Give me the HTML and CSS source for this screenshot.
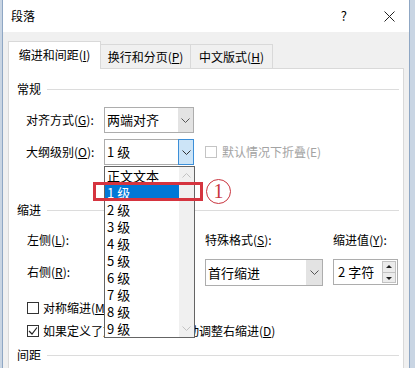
FILE: index.html
```html
<!DOCTYPE html>
<html lang="zh">
<head>
    <meta charset="UTF-8">
    <title>段落</title>
    <link rel="stylesheet" href="styles.css">
</head>
<body>
    <div class="window">
        <!-- 标题栏 -->
        <div class="titlebar">
            <span class="title">段落</span>
            <span class="help">?</span>
            <span class="close">
                <svg width="11" height="11" viewBox="0 0 11 11"><path d="M0.5 0.5 L10.5 10.5 M10.5 0.5 L0.5 10.5" stroke="#222" stroke-width="1" fill="none"/></svg>
            </span>
        </div>

        <!-- 选项卡 -->
        <div class="tabs">
            <div class="tab active">缩进和间距(<u>I</u>)</div>
            <div class="tab tab-2">换行和分页(<u>P</u>)</div>
            <div class="tab tab-3">中文版式(<u>H</u>)</div>
        </div>

        <div class="panel">
            <!-- 常规 -->
            <div class="group-head"><span>常规</span><i class="rule"></i></div>

            <div class="field first">
                <span class="field-label">对齐方式(<u>G</u>):</span>
                <div class="combo">
                    <span class="combo-text">两端对齐</span>
                    <span class="combo-btn"><svg width="9" height="5" viewBox="0 0 9 5"><path d="M0.5 0.5 L4.5 4.5 L8.5 0.5" fill="none" stroke="#555"/></svg></span>
                </div>
            </div>

            <div class="field">
                <span class="field-label">大纲级别(<u>O</u>):</span>
                <div class="combo open">
                    <span class="combo-text">1 级</span>
                    <span class="combo-btn"><svg width="9" height="5" viewBox="0 0 9 5"><path d="M0.5 0.5 L4.5 4.5 L8.5 0.5" fill="none" stroke="#333"/></svg></span>

                    <!-- 展开的下拉列表 -->
                    <div class="dropdown">
                        <ul class="dropdown-items">
                            <li>正文文本</li>
                            <li class="sel">1 级</li>
                            <li>2 级</li>
                            <li>3 级</li>
                            <li>4 级</li>
                            <li>5 级</li>
                            <li>6 级</li>
                            <li>7 级</li>
                            <li>8 级</li>
                            <li>9 级</li>
                        </ul>
                        <div class="scroll">
                            <svg width="9" height="5" viewBox="0 0 9 5"><path d="M0.5 4.5 L4.5 0.5 L8.5 4.5" fill="none" stroke="#c2c2c2"/></svg>
                            <svg width="9" height="5" viewBox="0 0 9 5"><path d="M0.5 0.5 L4.5 4.5 L8.5 0.5" fill="none" stroke="#c2c2c2"/></svg>
                        </div>
                    </div>

                    <!-- 标注 -->
                    <div class="mark-box"></div>
                    <span class="mark-num">1</span>
                </div>
                <span class="check disabled"><span class="box"></span>默认情况下折叠(E)</span>
            </div>

            <!-- 缩进 -->
            <div class="group-head indent-head"><span>缩进</span><i class="rule"></i></div>

            <div class="indent-grid">
                <span class="field-label">左侧(<u>L</u>):</span>
                <div class="spinner narrow"><span class="spin-text"></span><span class="spin-btns"><i class="up"></i><i class="down"></i></span></div>
                <span>特殊格式(<u>S</u>):</span>
                <span>缩进值(<u>Y</u>):</span>

                <span class="field-label">右侧(<u>R</u>):</span>
                <div class="spinner narrow"><span class="spin-text"></span><span class="spin-btns"><i class="up"></i><i class="down"></i></span></div>
                <div class="combo wide">
                    <span class="combo-text">首行缩进</span>
                    <span class="combo-btn"><svg width="9" height="5" viewBox="0 0 9 5"><path d="M0.5 0.5 L4.5 4.5 L8.5 0.5" fill="none" stroke="#555"/></svg></span>
                </div>
                <div class="spinner"><span class="spin-text">2 字符</span><span class="spin-btns"><i class="up"></i><i class="down"></i></span></div>
            </div>

            <div class="check-row first-check"><span class="box"></span>对称缩进(<u>M</u>)</div>
            <div class="check-row"><span class="box checked"><svg width="10" height="10" viewBox="0 0 10 10"><path d="M1 5 L4 8 L9 1.5" fill="none" stroke="#222" stroke-width="1.2"/></svg></span>如果定义了文档网格，则自动调整右缩进(<u>D</u>)</div>

            <!-- 间距 -->
            <div class="group-head spacing-head"><span>间距</span><i class="rule"></i></div>
        </div>
    </div>
</body>
</html>
```

FILE: styles.css
```css
* { box-sizing: border-box; }

body {
    margin: 0;
    background: #c9d5e3;
    font-family: "Noto Sans CJK SC", "Noto Sans", sans-serif;
    font-size: 12px;
    line-height: 16px;
    color: #000;
    overflow: hidden;
}

u { text-underline-offset: 1px; }

.window {
    margin-left: 2px;
    width: 408px;
    height: 368px;
    background: #f0f0f0;
    border-left: 1px solid #8fa7c4;
    border-right: 1px solid #8fa7c4;
    overflow: hidden;
}

.titlebar {
    height: 32px;
    background: #fff;
    display: flex;
    align-items: center;
    padding-left: 8px;
}
.title { flex: 1; }
.help { font-size: 13px; margin-right: 37px; }
.close { display: flex; margin-right: 14px; }

/* 选项卡 */
.tabs {
    display: flex;
    align-items: flex-end;
    height: 27px;
    margin: 9px 5px 0;
}
.tab {
    height: 24px;
    border: 1px solid #d9d9d9;
    border-bottom: 0;
    background: #f0f0f0;
    display: flex;
    align-items: center;
    justify-content: center;
    margin-left: -1px;
}
.tab.active {
    width: 93px;
    height: 28px;
    background: #fff;
    margin-left: 0;
    margin-bottom: -1px;
    position: relative;
    z-index: 1;
    padding-bottom: 2px;
}
.tab-2 { width: 91px; }
.tab-3 { width: 83px; }

.panel {
    margin: 0 5px;
    height: 320px;
    background: #fff;
    border: 1px solid #d9d9d9;
    padding: 12px 4px 0 8px;
}

.group-head {
    display: flex;
    align-items: center;
    height: 16px;
}
.rule {
    flex: 1;
    height: 1px;
    background: #dcdcdc;
    margin-left: 6px;
}
.indent-head { margin-top: 37px; }
.spacing-head { margin-top: 8px; }

.field {
    display: flex;
    align-items: center;
    padding-left: 9px;
    margin-top: 6px;
}
.field.first { margin-top: 10px; }
.field-label { width: 78px; }

/* 下拉框 */
.combo {
    width: 90px;
    height: 26px;
    border: 1px solid #adadad;
    background: #fff;
    display: flex;
    align-items: stretch;
}
.combo-text {
    flex: 1;
    padding-left: 2px;
    font-size: 13px;
    display: flex;
    align-items: center;
}
.combo-btn {
    width: 15px;
    background: #e3e3e3;
    display: flex;
    align-items: center;
    justify-content: center;
}
.combo.open {
    position: relative;
    z-index: 5;
}
.combo.open .combo-btn {
    background: #cce4f7;
    border: 1px solid #3c8fd8;
    margin: -1px -1px -1px 0;
    width: 16px;
}
.combo.wide { width: 118px; height: 27px; margin-top: 1px; }
.combo.wide .combo-btn { width: 16px; }

.dropdown {
    position: absolute;
    left: -1px;
    top: 26px;
    width: 91px;
    border: 1px solid #646464;
    background: #fff;
    display: flex;
}
.dropdown-items {
    flex: 1;
    list-style: none;
    margin: 0;
    padding: 0;
}
.dropdown-items li {
    height: 17px;
    line-height: 17px;
    padding-left: 2px;
    font-size: 13px;
}
.dropdown-items li.sel {
    background: #0078d7;
    color: #fff;
}
.scroll {
    width: 15px;
    background: #f0f0f0;
    display: flex;
    flex-direction: column;
    justify-content: space-between;
    align-items: center;
    padding: 6px 0 6px;
}

/* 标注 */
.mark-box {
    position: absolute;
    left: -12px;
    top: 42px;
    width: 110px;
    height: 19px;
    border: 3px solid #d5343f;
}
.mark-num {
    position: absolute;
    left: 101px;
    top: 39px;
    width: 25px;
    height: 25px;
    border: 1.5px solid #c9343e;
    border-radius: 50%;
    color: #c9343e;
    font-family: "Liberation Serif", serif;
    font-size: 20px;
    line-height: 22px;
    text-align: center;
}

/* 复选框 */
.check {
    display: flex;
    align-items: center;
    margin-left: 11px;
}
.check.disabled { color: #a3a3a3; }
.box {
    width: 12px;
    height: 12px;
    border: 1px solid #333;
    background: #fff;
    margin-right: 5px;
    display: flex;
    align-items: center;
    justify-content: center;
}
.check.disabled .box { border-color: #c4c4c4; margin-right: 5px; }

/* 缩进 */
.indent-grid {
    display: grid;
    grid-template-columns: 77px 101px 128px 65px;
    grid-template-rows: 26px 26px;
    row-gap: 6px;
    align-items: center;
    margin-top: 9px;
    padding-left: 10px;
}

.spinner {
    width: 65px;
    height: 26px;
    border: 1px solid #adadad;
    background: #fff;
    display: flex;
}
.spinner.narrow { width: 86px; }
.spin-text {
    flex: 1;
    padding-left: 4px;
    font-size: 13px;
    display: flex;
    align-items: center;
}
.spin-btns {
    width: 14px;
    display: flex;
    flex-direction: column;
    margin: 1px 1px 1px 0;
}
.spin-btns i {
    flex: 1;
    background: #ececec;
    border: 1px solid #c2c2c2;
    position: relative;
}
.spin-btns i + i { border-top: 0; }
.spin-btns i::after {
    content: "";
    position: absolute;
    left: 3px;
    top: 3px;
    border-left: 3px solid transparent;
    border-right: 3px solid transparent;
}
.spin-btns .up::after { border-bottom: 3px solid #222; }
.spin-btns .down::after { border-top: 3px solid #222; top: 4px; }

.check-row {
    display: flex;
    align-items: center;
    height: 16px;
    padding-left: 10px;
    margin-top: 7px;
    white-space: nowrap;
}
.check-row.first-check { margin-top: 15px; }
.check-row .box { margin-right: 4px; }
```
